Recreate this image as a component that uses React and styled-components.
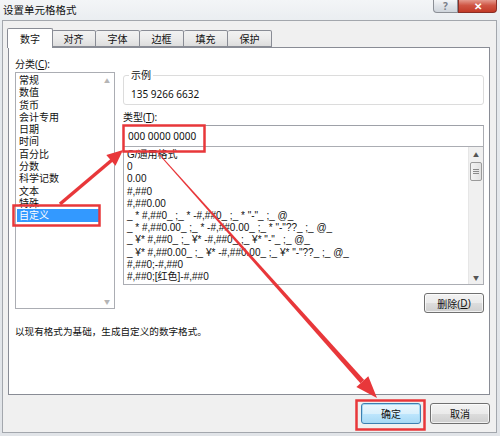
import React from 'react';
import styled, { createGlobalStyle } from 'styled-components';

const GlobalStyle = createGlobalStyle`
  html, body {
    margin: 0;
    padding: 0;
  }
  body {
    width: 500px;
    height: 436px;
    overflow: hidden;
    background: #e4e8ec;
    font-family: "Noto Sans", "Noto Sans CJK SC", sans-serif;
    font-size: 10px;
    color: #000;
  }
`;

const Window = styled.div`
  position: relative;
  width: 500px;
  height: 436px;
  display: flex;
  flex-direction: column;
  background: linear-gradient(to bottom, #f3f5f7 0, #e6eaee 30px, #e1e4e8 100%);
`;

const TitleBar = styled.div`
  height: 20px;
  display: flex;
  align-items: flex-start;
  justify-content: space-between;
  padding-left: 3px;
`;

const Title = styled.div`
  font-family: "Noto Sans CJK SC", sans-serif;
  font-size: 10.5px;
  line-height: 20px;
  color: #111;
`;

const Caption = styled.div`
  display: flex;
  margin-right: 3px;
`;

const CaptionButton = styled.div`
  height: 13px;
  width: ${(p) => p.w}px;
  display: flex;
  align-items: center;
  justify-content: center;
  box-sizing: border-box;
  border: 1px solid ${(p) => (p.close ? '#8a2e26' : '#8b8f96')};
  border-top: none;
  border-radius: ${(p) => (p.close ? '0 0 4px 0' : '0 0 0 4px')};
  background: ${(p) =>
    p.close
      ? 'linear-gradient(to bottom, #e49a8e 0, #cf5544 45%, #c23a28 100%)'
      : 'linear-gradient(to bottom, #f4f6f8 0, #dfe3e8 50%, #cfd5dc 100%)'};
  color: ${(p) => (p.close ? '#fff' : '#7a7f88')};
  font-size: 10px;
  font-weight: bold;
  line-height: 1;
`;

const Frame = styled.div`
  flex: 1;
  margin: 0 3px 3px 2px;
  border: 1px solid #a3a7ad;
  background: #f0f0f0;
  padding: 7px 6px 0 5px;
  display: flex;
  flex-direction: column;
`;

const TabStrip = styled.div`
  display: flex;
  align-items: flex-end;
  height: 19px;
  position: relative;
  z-index: 1;
`;

const Tab = styled.div`
  box-sizing: border-box;
  width: ${(p) => (p.active ? 46 : 44)}px;
  height: ${(p) => (p.active ? 20 : 17)}px;
  margin-left: ${(p) => (p.active ? -1 : 0)}px;
  margin-right: ${(p) => (p.active ? -1 : 0)}px;
  margin-bottom: ${(p) => (p.active ? -1 : 0)}px;
  border: 1px solid #898c95;
  border-bottom: ${(p) => (p.active ? 'none' : '1px solid #898c95')};
  border-left-width: ${(p) => (p.first || p.active ? 1 : 0)}px;
  border-radius: 2px 2px 0 0;
  background: ${(p) =>
    p.active ? '#fff' : 'linear-gradient(to bottom, #f2f2f2 0, #ebebeb 50%, #dddddd 100%)'};
  display: flex;
  align-items: center;
  justify-content: center;
  font-family: "Noto Sans CJK SC", sans-serif;
  font-size: 10px;
  color: #111;
  position: relative;
  z-index: ${(p) => (p.active ? 2 : 1)};
`;

const Panel = styled.div`
  height: 348px;
  box-sizing: border-box;
  background: #fff;
  border: 1px solid #898c95;
  padding: 8px 5px 0 6px;
`;

const Columns = styled.div`
  display: flex;
  gap: 8px;
  align-items: flex-start;
`;

const LeftCol = styled.div`
  width: 100px;
  display: flex;
  flex-direction: column;
`;

const RightCol = styled.div`
  flex: 1;
  display: flex;
  flex-direction: column;
  padding-top: 12px;
`;

const Label = styled.div`
  font-family: "Noto Sans", "Noto Sans CJK SC", sans-serif;
  font-size: 10px;
  line-height: ${(p) => p.lh || 16}px;
  height: ${(p) => p.lh || 16}px;
  color: #111;
  margin-top: ${(p) => p.mt || 0}px;
`;

const ListBox = styled.div`
  box-sizing: border-box;
  height: ${(p) => p.h}px;
  border: 1px solid #abadb3;
  display: flex;
  background: #fff;
  margin-top: ${(p) => p.mt || 0}px;
`;

const ListItems = styled.div`
  flex: 1;
  padding: ${(p) => p.pad || '1px 0 0 1px'};
`;

const ListItem = styled.div`
  height: ${(p) => p.lh}px;
  line-height: ${(p) => p.lh}px;
  padding-left: 2px;
  white-space: nowrap;
  font-family: ${(p) =>
    p.latin
      ? '"Liberation Sans", "Noto Sans CJK SC", sans-serif'
      : '"Noto Sans CJK SC", sans-serif'};
  font-size: 10px;
  background: ${(p) => (p.selected ? '#3399ff' : 'transparent')};
  color: ${(p) => (p.selected ? '#fff' : '#111')};
`;

const ScrollBar = styled.div`
  width: 14px;
  display: flex;
  flex-direction: column;
  justify-content: space-between;
  align-items: stretch;
  background: ${(p) => (p.enabled ? '#f0f0f0' : '#fff')};
  border-left: 1px solid ${(p) => (p.enabled ? '#e6e6e6' : '#fff')};
`;

const ScrollArrow = styled.div`
  height: 14px;
  display: flex;
  align-items: center;
  justify-content: center;
  color: ${(p) => (p.enabled ? '#555' : '#b5b5b5')};
  font-size: 6px;
`;

const ScrollTrack = styled.div`
  flex: 1;
  padding: 1px 1px;
`;

const Thumb = styled.div`
  height: 19px;
  box-sizing: border-box;
  border: 1px solid #9a9a9a;
  border-radius: 2px;
  background: linear-gradient(to right, #f3f3f3, #e2e2e2);
  display: flex;
  flex-direction: column;
  align-items: center;
  justify-content: center;
  gap: 1px;
`;

const Grip = styled.div`
  width: 6px;
  height: 1px;
  background: #8a8a8a;
`;

const SampleGroup = styled.fieldset`
  margin: 0;
  min-width: 0;
  border: 1px solid #dcdcdc;
  border-radius: 3px;
  padding: 5px 6px 3px;
  legend {
    padding: 0 2px;
    margin-left: -1px;
    font-family: "Noto Sans CJK SC", sans-serif;
    font-size: 10px;
    line-height: 14px;
    color: #111;
  }
`;

const SampleValue = styled.div`
  font-size: 10px;
  line-height: 14px;
  color: #111;
  padding-left: 1px;
`;

const TypeInput = styled.div`
  height: 22px;
  box-sizing: border-box;
  border: 1px solid #abadb3;
  border-top-color: #9ea1a8;
  padding: 0 4px;
  display: flex;
  align-items: center;
  font-size: 10px;
  color: #111;
`;

const ButtonRow = styled.div`
  display: flex;
  justify-content: flex-end;
  gap: 9px;
  margin-top: ${(p) => p.mt || 0}px;
`;

const Button = styled.div`
  width: 60px;
  height: ${(p) => p.h || 21}px;
  box-sizing: border-box;
  border: 1px solid #707070;
  border-radius: 3px;
  background: linear-gradient(to bottom, #f2f2f2 0, #ebebeb 50%, #dddddd 51%, #cfcfcf 100%);
  box-shadow: inset 0 0 0 1px rgba(255, 255, 255, 0.7);
  display: flex;
  align-items: center;
  justify-content: center;
  font-family: "Noto Sans", "Noto Sans CJK SC", sans-serif;
  font-size: 10px;
  color: #111;
  ${(p) =>
    p.primary &&
    `
    border-color: #3c7fb1;
    box-shadow: inset 0 0 0 1px #a6d9f4;
    background: linear-gradient(to bottom, #eaf6fd 0, #d9f0fc 50%, #bee6fd 51%, #a7d9f5 100%);
  `}
`;

const Description = styled.div`
  font-family: "Noto Sans CJK SC", sans-serif;
  font-size: 9.6px;
  line-height: 12px;
  margin-top: 12px;
  color: #111;
`;

const Footer = styled.div`
  flex: 1;
  padding-top: 8px;
`;

const Overlay = styled.svg`
  position: absolute;
  left: 0;
  top: 0;
  pointer-events: none;
`;

const tabs = ['数字', '对齐', '字体', '边框', '填充', '保护'];

const categories = [
  '常规', '数值', '货币', '会计专用', '日期', '时间',
  '百分比', '分数', '科学记数', '文本', '特殊', '自定义',
];

const formats = [
  'G/通用格式',
  '0',
  '0.00',
  '#,##0',
  '#,##0.00',
  '_ * #,##0_ ;_ * -#,##0_ ;_ * "-"_ ;_ @_',
  '_ * #,##0.00_ ;_ * -#,##0.00_ ;_ * "-"??_ ;_ @_',
  '_ ¥* #,##0_ ;_ ¥* -#,##0_ ;_ ¥* "-"_ ;_ @_',
  '_ ¥* #,##0.00_ ;_ ¥* -#,##0.00_ ;_ ¥* "-"??_ ;_ @_',
  '#,##0;-#,##0',
  '#,##0;[红色]-#,##0',
];

const RED = '#e8373a';

export default function App() {
  return (
    <>
      <GlobalStyle />
      <Window>
        <TitleBar>
          <Title>设置单元格格式</Title>
          <Caption>
            <CaptionButton w={25}>?</CaptionButton>
            <CaptionButton w={39} close>✕</CaptionButton>
          </Caption>
        </TitleBar>

        <Frame>
          <TabStrip>
            {tabs.map((t, i) => (
              <Tab key={t} active={i === 0} first={i === 0}>
                {t}
              </Tab>
            ))}
          </TabStrip>

          <Panel>
            <Columns>
              <LeftCol>
                <Label>分类(<u>C</u>):</Label>
                <ListBox h={237}>
                  <ListItems>
                    {categories.map((c) => (
                      <ListItem key={c} lh={12.3} selected={c === '自定义'}>
                        {c}
                      </ListItem>
                    ))}
                  </ListItems>
                  <ScrollBar>
                    <ScrollArrow>▲</ScrollArrow>
                    <ScrollArrow>▼</ScrollArrow>
                  </ScrollBar>
                </ListBox>
              </LeftCol>

              <RightCol>
                <SampleGroup>
                  <legend>示例</legend>
                  <SampleValue>135 9266 6632</SampleValue>
                </SampleGroup>
                <Label mt={5} lh={15}>类型(<u>T</u>):</Label>
                <TypeInput>000 0000 0000</TypeInput>
                <ListBox h={139} mt={-1}>
                  <ListItems pad="2px 0 0 1px">
                    {formats.map((f) => (
                      <ListItem key={f} lh={12.2} latin>
                        {f}
                      </ListItem>
                    ))}
                  </ListItems>
                  <ScrollBar enabled>
                    <ScrollArrow enabled>▲</ScrollArrow>
                    <ScrollTrack>
                      <Thumb>
                        <Grip />
                        <Grip />
                        <Grip />
                      </Thumb>
                    </ScrollTrack>
                    <ScrollArrow enabled>▼</ScrollArrow>
                  </ScrollBar>
                </ListBox>
                <ButtonRow mt={8}>
                  <Button h={20}>删除(<u>D</u>)</Button>
                </ButtonRow>
              </RightCol>
            </Columns>
            <Description>以现有格式为基础，生成自定义的数字格式。</Description>
          </Panel>

          <Footer>
            <ButtonRow>
              <Button primary>确定</Button>
              <Button>取消</Button>
            </ButtonRow>
          </Footer>
        </Frame>

        <Overlay width="500" height="436" viewBox="0 0 500 436">
          <rect x="13.5" y="205.5" width="86" height="20" fill="none" stroke={RED} strokeWidth="2.5" />
          <rect x="123.5" y="125.5" width="81" height="26" fill="none" stroke={RED} strokeWidth="2.5" />
          <rect x="356.5" y="400.5" width="68" height="29" fill="none" stroke={RED} strokeWidth="2.5" />
          <line x1="60" y1="204" x2="112" y2="160" stroke={RED} strokeWidth="3.5" />
          <polygon points="123,150 115.5,165.7 106.3,155.1" fill={RED} />
          <polygon points="158.4,152.7 364.2,379.9 360.4,383.3 157.6,153.3" fill={RED} />
          <polygon points="377,398 356.4,386.9 368.3,376.3" fill={RED} />
        </Overlay>
      </Window>
    </>
  );
}
